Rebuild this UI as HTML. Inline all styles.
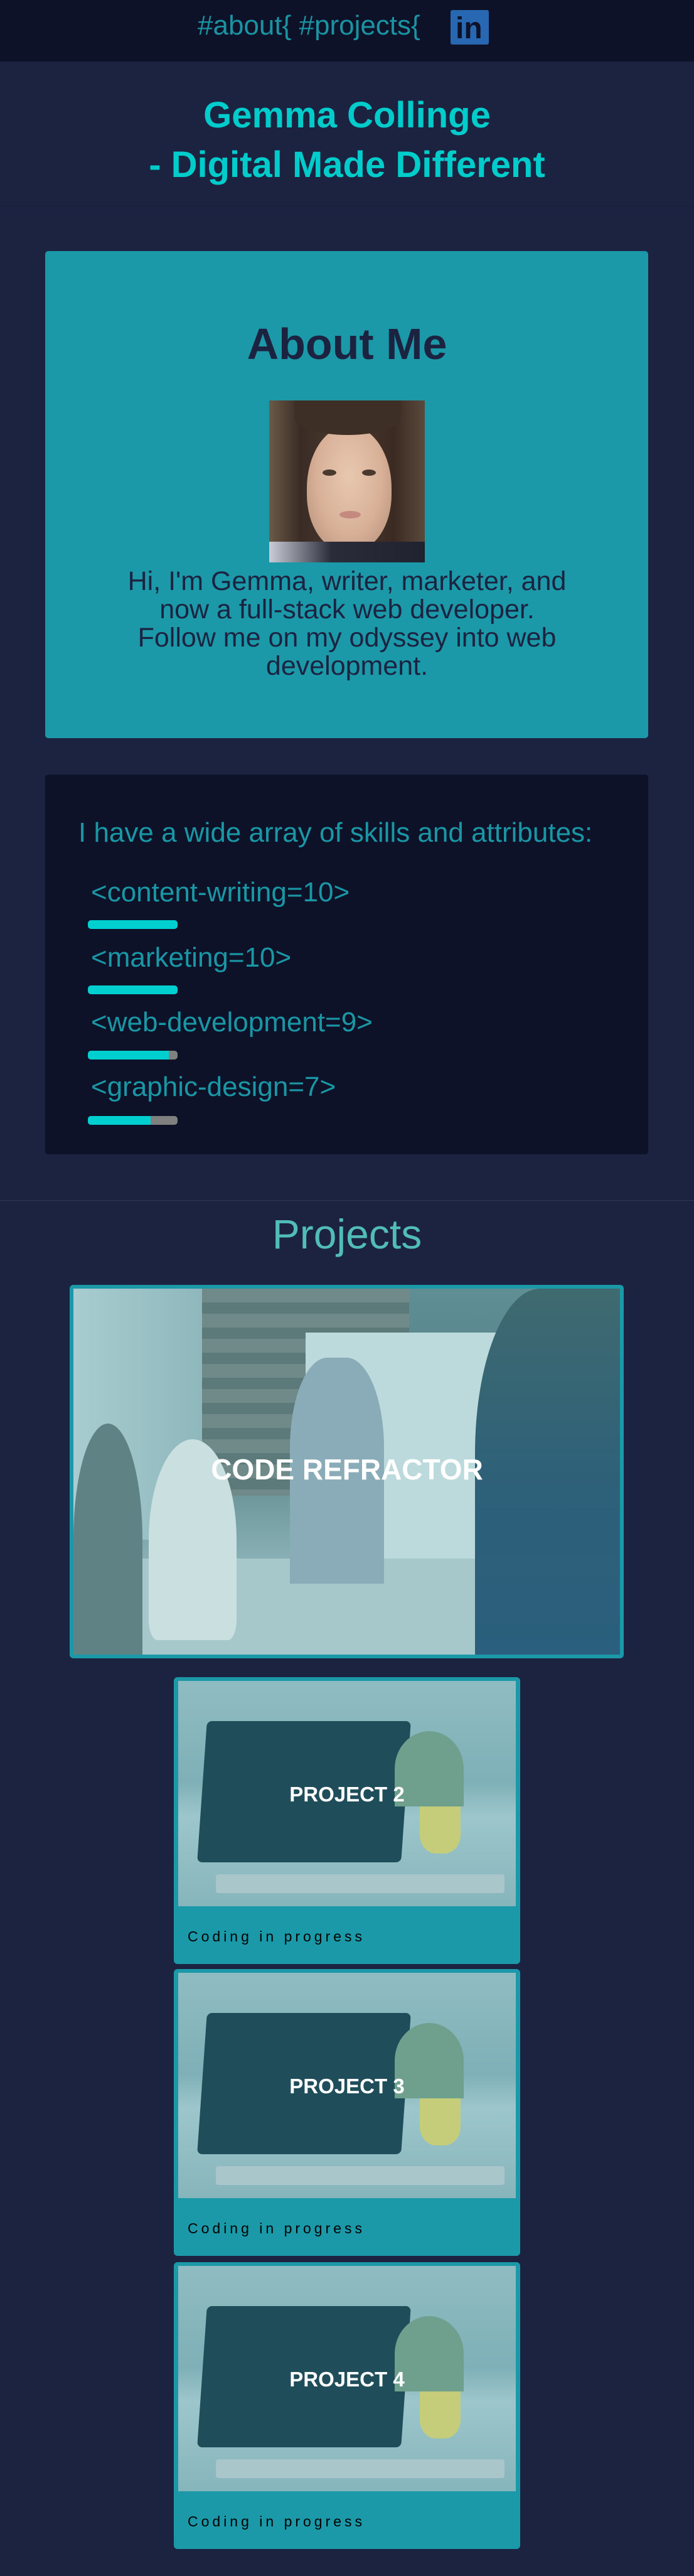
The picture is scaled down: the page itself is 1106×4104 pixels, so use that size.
<!DOCTYPE html>
<html><head><meta charset="utf-8">
<style>
*{margin:0;padding:0;box-sizing:border-box}
html,body{width:1106px;height:4104px;background:#1c2340;overflow:hidden}
body{position:relative;font-family:"Liberation Sans",sans-serif}
.a{position:absolute;white-space:nowrap}
.c{left:0;width:1106px;text-align:center}
.bar{position:absolute;left:140px;width:143px;height:14px;border-radius:5px;background:#808080;overflow:hidden}
.bar i{display:block;height:100%;background:#00cfd0}
.lab{left:145px;font-size:44px;line-height:44px;color:#1a97a5}
.card{position:absolute;left:277px;width:552px;height:457px;background:#1b99a8;border-radius:6px}
.lap{position:absolute;left:7px;top:6px;width:538px;height:359px;overflow:hidden;
background:linear-gradient(180deg,#8fbcc2 0%,#7fb0b7 45%,#9cc6cb 60%,#86b5bb 100%)}
.pt{position:absolute;left:0;width:100%;text-align:center;top:170px;font-size:33px;line-height:33px;font-weight:bold;color:#fff}
.cp{position:absolute;left:22px;top:402px;font-size:23px;line-height:23px;letter-spacing:5px;color:#000}
</style></head><body>

<!-- header -->
<div class="a" style="left:0;top:0;width:1106px;height:98px;background:#0d1229"></div>
<div class="a" style="left:315px;top:19px;font-size:44px;line-height:44px;color:#1a93a3">#about{&nbsp;#projects{</div>
<div class="a" style="left:718px;top:16px;width:61px;height:55px;background:#2867b2;border-radius:3px"></div>
<div class="a" style="left:726px;top:22px;font-size:48px;line-height:48px;font-weight:bold;color:#0d1229">in</div>

<!-- title -->
<div class="a c" style="top:155px;font-size:58px;line-height:58px;font-weight:bold;color:#00cccc">Gemma Collinge</div>
<div class="a c" style="top:234px;font-size:58px;line-height:58px;font-weight:bold;color:#00cccc">- Digital Made Different</div>
<div class="a" style="left:0;top:328px;width:1106px;height:1px;background:#18203a"></div>

<!-- about card -->
<div class="a" style="left:72px;top:400px;width:961px;height:776px;background:#1b99a8;border-radius:5px"></div>
<div class="a c" style="top:513px;font-size:70px;line-height:70px;font-weight:bold;color:#1c2340">About Me</div>
<div class="a" style="left:429px;top:638px;width:248px;height:258px;overflow:hidden;background:linear-gradient(90deg,#6b5a48 0%,#3a2c25 20%,#4a3a30 50%,#3a2a22 80%,#5a4a3c 100%)">
  <div style="position:absolute;left:60px;top:40px;width:135px;height:200px;border-radius:50% 50% 45% 45%;background:radial-gradient(ellipse at 50% 40%,#e8c8b0 0%,#d8b098 55%,#b08a74 100%)"></div>
  <div style="position:absolute;left:40px;top:0;width:170px;height:55px;border-radius:0 0 50% 50%;background:#3d2e26"></div>
  <div style="position:absolute;left:85px;top:110px;width:22px;height:10px;border-radius:50%;background:#4a3a2e"></div>
  <div style="position:absolute;left:148px;top:110px;width:22px;height:10px;border-radius:50%;background:#4a3a2e"></div>
  <div style="position:absolute;left:112px;top:176px;width:34px;height:12px;border-radius:50%;background:#c48a80"></div>
  <div style="position:absolute;left:0;top:225px;width:248px;height:33px;background:linear-gradient(90deg,#c9ccd6,#2a2c3a 40%,#202230)"></div>
</div>
<div class="a c" style="top:904px;font-size:43px;line-height:45px;color:#1c2340">Hi, I'm Gemma, writer, marketer, and<br>now a full-stack web developer.<br>Follow me on my odyssey into web<br>development.</div>

<!-- skills card -->
<div class="a" style="left:72px;top:1234px;width:961px;height:605px;background:#0d1229;border-radius:5px"></div>
<div class="a" style="left:125px;top:1305px;font-size:44px;line-height:44px;color:#1a97a5">I have a wide array of skills and attributes:</div>
<div class="a lab" style="top:1400px">&lt;content-writing=10&gt;</div>
<div class="bar" style="top:1466px"><i style="width:100%"></i></div>
<div class="a lab" style="top:1504px">&lt;marketing=10&gt;</div>
<div class="bar" style="top:1570px"><i style="width:100%"></i></div>
<div class="a lab" style="top:1607px">&lt;web-development=9&gt;</div>
<div class="bar" style="top:1674px"><i style="width:90%"></i></div>
<div class="a lab" style="top:1710px">&lt;graphic-design=7&gt;</div>
<div class="bar" style="top:1778px"><i style="width:70%"></i></div>

<div class="a" style="left:0;top:1912px;width:1106px;height:1px;background:#2f3754"></div>

<!-- projects -->
<div class="a c" style="top:1933px;font-size:66px;line-height:66px;color:#52bdb8">Projects</div>
<div class="a" style="left:111px;top:2047px;width:883px;height:595px;background:#1b99a8;border-radius:6px"></div>
<div class="a" style="left:117px;top:2053px;width:871px;height:583px;overflow:hidden;background:linear-gradient(180deg,#5f8e95 0%,#557f85 40%,#8ab2b6 75%,#9ec2c4 100%)">
  <div style="position:absolute;left:0;top:0;width:205px;height:400px;background:linear-gradient(90deg,#a8ccd0,#8fb8bc)"></div>
  <div style="position:absolute;left:205px;top:0;width:330px;height:330px;background:repeating-linear-gradient(180deg,#6f8a88 0 22px,#5d7a7a 22px 40px)"></div>
  <div style="position:absolute;left:370px;top:70px;width:390px;height:390px;background:#bcd9dc"></div>
  <div style="position:absolute;left:0;top:430px;width:871px;height:160px;background:#a7c8ca"></div>
  <div style="position:absolute;left:0;top:215px;width:110px;height:370px;border-radius:50% 50% 0 0;background:#5f8285"></div>
  <div style="position:absolute;left:120px;top:240px;width:140px;height:320px;border-radius:50% 50% 10% 10%;background:#c9dfe0"></div>
  <div style="position:absolute;left:345px;top:110px;width:150px;height:360px;border-radius:40% 40% 0 0;background:#8aabb8"></div>
  <div style="position:absolute;left:640px;top:0;width:231px;height:583px;border-radius:45% 0 0 0;background:linear-gradient(180deg,#3f6a70 0%,#2d6079 55%,#2a5f7d 100%)"></div>
</div>
<div class="a c" style="top:2318px;font-size:46px;line-height:46px;font-weight:bold;color:#fff">CODE REFRACTOR</div>

<!-- project cards -->
<div class="card" style="top:2672px">
  <div class="lap">
    <div style="position:absolute;left:38px;top:64px;width:325px;height:225px;background:#1f4d5a;border-radius:8px;transform:skewX(-4deg)"></div>
    <div style="position:absolute;left:60px;top:308px;width:460px;height:30px;background:#a9c7cb;border-radius:4px"></div>
    <div style="position:absolute;left:345px;top:80px;width:110px;height:120px;border-radius:50% 50% 0 0;background:#6fa08e"></div>
    <div style="position:absolute;left:385px;top:200px;width:65px;height:75px;border-radius:0 0 40% 40%;background:#c6cd7a"></div>
  </div>
  <div class="pt">PROJECT 2</div>
  <div class="cp">Coding in progress</div>
</div>
<div class="card" style="top:3137px">
  <div class="lap">
    <div style="position:absolute;left:38px;top:64px;width:325px;height:225px;background:#1f4d5a;border-radius:8px;transform:skewX(-4deg)"></div>
    <div style="position:absolute;left:60px;top:308px;width:460px;height:30px;background:#a9c7cb;border-radius:4px"></div>
    <div style="position:absolute;left:345px;top:80px;width:110px;height:120px;border-radius:50% 50% 0 0;background:#6fa08e"></div>
    <div style="position:absolute;left:385px;top:200px;width:65px;height:75px;border-radius:0 0 40% 40%;background:#c6cd7a"></div>
  </div>
  <div class="pt">PROJECT 3</div>
  <div class="cp">Coding in progress</div>
</div>
<div class="card" style="top:3604px">
  <div class="lap">
    <div style="position:absolute;left:38px;top:64px;width:325px;height:225px;background:#1f4d5a;border-radius:8px;transform:skewX(-4deg)"></div>
    <div style="position:absolute;left:60px;top:308px;width:460px;height:30px;background:#a9c7cb;border-radius:4px"></div>
    <div style="position:absolute;left:345px;top:80px;width:110px;height:120px;border-radius:50% 50% 0 0;background:#6fa08e"></div>
    <div style="position:absolute;left:385px;top:200px;width:65px;height:75px;border-radius:0 0 40% 40%;background:#c6cd7a"></div>
  </div>
  <div class="pt">PROJECT 4</div>
  <div class="cp">Coding in progress</div>
</div>

</body></html>
